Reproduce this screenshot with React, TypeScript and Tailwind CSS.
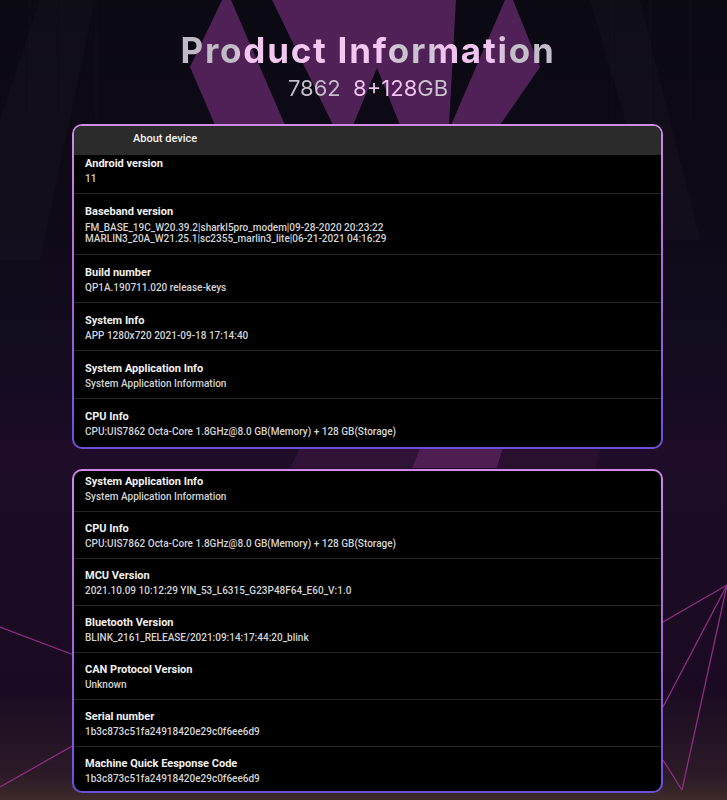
import React from "react";

type Item = { title: string; value: string[] };

const aboutDevice: Item[] = [
  { title: "Android version", value: ["11"] },
  {
    title: "Baseband version",
    value: [
      "FM_BASE_19C_W20.39.2|sharkl5pro_modem|09-28-2020 20:23:22",
      "MARLIN3_20A_W21.25.1|sc2355_marlin3_lite|06-21-2021 04:16:29",
    ],
  },
  { title: "Build number", value: ["QP1A.190711.020 release-keys"] },
  { title: "System Info", value: ["APP 1280x720 2021-09-18 17:14:40"] },
  { title: "System Application Info", value: ["System Application Information"] },
  { title: "CPU Info", value: ["CPU:UIS7862 Octa-Core 1.8GHz@8.0 GB(Memory) + 128 GB(Storage)"] },
];

const moreInfo: Item[] = [
  { title: "System Application Info", value: ["System Application Information"] },
  { title: "CPU Info", value: ["CPU:UIS7862 Octa-Core 1.8GHz@8.0 GB(Memory) + 128 GB(Storage)"] },
  { title: "MCU Version", value: ["2021.10.09 10:12:29 YIN_53_L6315_G23P48F64_E60_V:1.0"] },
  { title: "Bluetooth Version", value: ["BLINK_2161_RELEASE/2021:09:14:17:44:20_blink"] },
  { title: "CAN Protocol Version", value: ["Unknown"] },
  { title: "Serial number", value: ["1b3c873c51fa24918420e29c0f6ee6d9"] },
  { title: "Machine Quick Eesponse Code", value: ["1b3c873c51fa24918420e29c0f6ee6d9"] },
];

function Row({ item, pad, last }: { item: Item; pad: string; last?: boolean }) {
  const multi = item.value.length > 1;
  return (
    <div className={`px-[11px] ${pad} ${last ? "" : "border-b border-[#242424]"}`}>
      <div className="text-[11px] leading-[14px] font-bold text-[#f1f1f1]">{item.title}</div>
      <div
        className={
          multi
            ? "mt-[3px] text-[10px] leading-[11px] font-medium text-[#d4d4d4]"
            : "mt-[2px] text-[10px] leading-[12px] font-medium text-[#d4d4d4]"
        }
      >
        {item.value.map((v) => (
          <div key={v}>{v}</div>
        ))}
      </div>
    </div>
  );
}

function Panel({ children, className }: { children: React.ReactNode; className?: string }) {
  return (
    <div className={`ml-[72px] w-[591px] rounded-[10px] bg-[linear-gradient(180deg,#d08ae4_0%,#a46ad8_50%,#6a4fd8_100%)] p-[2px] ${className ?? ""}`}>
      <div className="overflow-hidden rounded-[8px] bg-black">{children}</div>
    </div>
  );
}

function Backdrop() {
  return (
    <svg className="absolute inset-0 h-full w-full" viewBox="0 0 727 800" preserveAspectRatio="none">
      {/* faint stage beams */}
      <polygon points="40,0 95,0 40,260 0,260 0,120" fill="#ffffff" opacity="0.018" />
      <polygon points="590,0 640,0 700,240 660,240" fill="#ffffff" opacity="0.02" />
      {[30, 62, 96, 612, 650, 690].map((x) => (
        <line key={x} x1={x} y1="0" x2={x} y2="120" stroke="#ffffff" strokeOpacity="0.025" />
      ))}
      {/* big W mark */}
      <g fill="#4f2156">
        <polygon points="222,0 231,0 285,125 215,125 190,67" />
        <polygon points="272,0 456,0 449,125 400,125 377,68 353,125 333,125" />
        <polygon points="505,0 513,0 540,67 500,125 451,125" />
      </g>
      {/* glow between panels */}
      <polygon points="0,440 727,440 727,470 0,470" fill="#1f0c29" />
      <polygon points="300,448 420,448 412,468 290,468" fill="#2f1236" />
      <polygon points="420,448 503,448 497,468 412,468" fill="#4e1d52" />
      <polygon points="503,448 600,448 596,468 497,468" fill="#29102f" />
      {/* floor lines */}
      <g stroke="#8e2f80" strokeWidth="1.3" fill="none">
        <line x1="0" y1="627" x2="74" y2="655" />
        <line x1="0" y1="787" x2="74" y2="745" />
        <line x1="727" y1="585" x2="663" y2="622" />
        <line x1="727" y1="585" x2="663" y2="707" />
        <line x1="727" y1="585" x2="682" y2="790" />
        <line x1="663" y1="760" x2="682" y2="790" />
      </g>
    </svg>
  );
}

export default function App() {
  return (
    <div className="relative h-[800px] w-full overflow-hidden bg-[linear-gradient(180deg,#0b0912_0%,#0d0a16_22%,#140b1f_45%,#1c0d27_60%,#1a0b22_86%,#2c1a27_97%,#3d2b2b_100%)] font-['Roboto',sans-serif]">
      <Backdrop />
      <div className="relative flex flex-col">
        <header className="flex flex-col items-center pl-[9px] pt-[29px]">
          <h1 className="bg-[linear-gradient(90deg,#bfbac4_0%,#bfbac4_14%,#f2c7f0_17%,#f2c7f0_55%,#c9c3cd_58%,#c9c3cd_66%,#efc4ee_70%,#efc4ee_84%,#c3bec8_88%,#c3bec8_100%)] bg-clip-text font-['Inter',sans-serif] text-[35px] leading-[42px] font-bold tracking-[0.05em] text-transparent">
            Product Information
          </h1>
          <p className="mt-[3px] bg-[linear-gradient(90deg,#c4bfc8_0%,#c4bfc8_36%,#f0c5ee_40%,#f0c5ee_81%,#cbc6cf_83%,#cbc6cf_100%)] bg-clip-text font-['Inter',sans-serif] text-[22px] leading-[28px] font-normal whitespace-pre text-transparent">
            {"7862  8+128GB"}
          </p>
        </header>

        <Panel className="mt-[22px]">
          <div className="h-[29px] bg-[#2b2b2b] pl-[59px] text-[11px] leading-[25px] font-medium text-[#f3f3f3]">
            About device
          </div>
          {aboutDevice.map((item, i) => (
            <Row
              key={item.title}
              item={item}
              last={i === aboutDevice.length - 1}
              pad={
                i === 0
                  ? "pt-[2px] pb-[8px]"
                  : item.value.length > 1
                    ? "pt-[11px] pb-[10px]"
                    : i === aboutDevice.length - 1
                      ? "pt-[11px] pb-[9px]"
                      : "pt-[11px] pb-[8px]"
              }
            />
          ))}
        </Panel>

        <Panel className="mt-[20px]">
          {moreInfo.map((item, i) => (
            <Row
              key={item.title + i}
              item={item}
              last={i === moreInfo.length - 1}
              pad={i === 0 ? "pt-[4px] pb-[8px]" : i === moreInfo.length - 1 ? "pt-[10px] pb-[6px]" : "pt-[10px] pb-[8px]"}
            />
          ))}
        </Panel>
      </div>
    </div>
  );
}
